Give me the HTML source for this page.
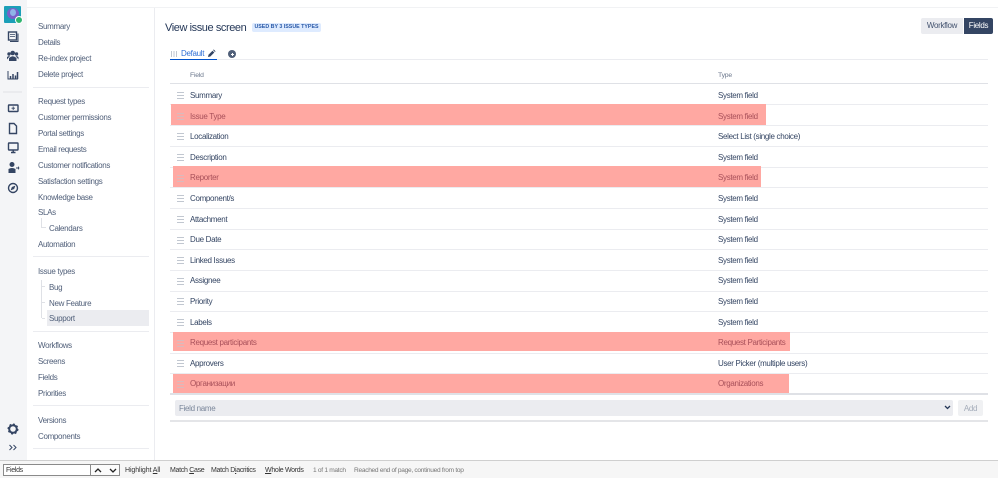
<!DOCTYPE html>
<html><head><meta charset="utf-8">
<style>
html,body{margin:0;padding:0;background:#fff}
body{width:998px;height:478px;position:relative;overflow:hidden;font-family:"Liberation Sans","Noto Sans CJK JP",sans-serif;font-size:8px;letter-spacing:-.32px;color:#42526e;filter:blur(.3px)}
.a{position:absolute;white-space:nowrap;line-height:10px}
.n{position:absolute;left:38px;margin-top:1px;white-space:nowrap;line-height:10px;color:#505f79}
.s{position:absolute;left:49px;margin-top:1px;white-space:nowrap;line-height:10px;color:#505f79}
.h{position:absolute;height:1px;background:#ebecf0}
.side{left:33px;width:116px;height:1px;position:absolute;background:#ebecf0}
.f{position:absolute;left:190px;margin-top:1px;white-space:nowrap;line-height:10px;color:#344563}
.t{position:absolute;left:718px;margin-top:1px;white-space:nowrap;line-height:10px;color:#344563}
.g{position:absolute;left:177px;width:7px;height:5px;border-top:1px solid #c1c7d0;border-bottom:1px solid #c1c7d0}
.g:after{content:"";position:absolute;left:0;right:0;top:2px;height:1px;background:#c1c7d0}
.r{position:absolute;background:#ffa8a2}
.o{color:#a8505a}
.b{color:#333;font-size:7px;letter-spacing:-.3px}
.m{color:#777;font-size:6.600px;letter-spacing:-.3px}
svg{position:absolute;overflow:visible}
</style></head><body>
<div class="a" style="left:0;top:0;width:27px;height:460px;background:#f4f5f7"></div>
<div class="a" style="left:27px;top:7px;width:971px;height:1px;background:#f1f2f4"></div>
<div class="a" style="left:154px;top:8px;width:1px;height:452px;background:#ebecf0"></div>

<div class="a" style="left:4px;top:6px;width:17px;height:17px;background:#1b9fb8;border-radius:1px"></div>
<div class="a" style="left:7px;top:8px;width:12px;height:11px;background:#7a5fc9;border-radius:50%"></div>
<div class="a" style="left:10px;top:9px;width:6px;height:7px;background:#8fb4e8;border-radius:50%"></div>
<div class="a" style="left:15px;top:16px;width:8px;height:8px;background:#2fb56f;border:1px solid #fff;border-radius:50%;box-sizing:border-box"></div>

<svg style="left:0;top:0" width="27" height="200" fill="none" stroke="#344563" stroke-width="1.4">
<rect x="8.5" y="32" width="8" height="8"/><path d="M10 41.5h8v-8" stroke-width="1"/><path d="M10 34.5h5M10 36.5h5" stroke-width=".8"/>
<g fill="#344563" stroke="none"><circle cx="12.7" cy="53" r="2.3"/><circle cx="9" cy="54" r="1.7"/><circle cx="16.5" cy="54" r="1.7"/><path d="M9 61v-3q3.700-3.500 7.500 0v3z"/><path d="M7 59.500v-2.500q1-1 3-1zM18.500 59.500v-2.500q-1-1-3-1z"/></g>
<path d="M8 71v8h10" stroke-width="1"/><path d="M10.500 79v-3M13 79v-5M15.500 79v-3.500M17.500 79v-7" stroke-width="1.5"/>
<rect x="8.500" y="105" width="9.500" height="6.500" rx=".5"/><path d="M13.200 106.500v3.500M11.500 108.200h3.500" stroke-width=".9"/>
<path d="M9.500 123.500h4.500l2.500 2.500v7.500h-7z"/>
<rect x="8.500" y="143" width="9.500" height="7" rx=".5"/><path d="M13.200 150v2M11 152.500h4.500"/>
<g fill="#344563" stroke="none"><circle cx="12" cy="164.500" r="2.500"/><path d="M8.500 173v-4q3.500-2 7 0v4z"/><path d="M16 167.500h2v-1.500l1.500 2-1.500 2v-1.500h-2z"/></g>
<circle cx="13" cy="188" r="4.500"/><path d="M15 186l-3 1.200-1 2.800 3-1.200z" fill="#344563" stroke-width=".5"/>
<path d="M3 92h19" stroke="#dfe1e6" stroke-width="1"/>
</svg>
<svg style="left:0;top:415" width="27" height="45" fill="none" stroke="#344563">
<circle cx="13" cy="14" r="3.800" stroke-width="2"/><circle cx="13" cy="14" r="5" stroke-width="1" stroke-dasharray="2 1.900"/>
<path d="M9.500 30l2.500 2.500-2.500 2.500M13.500 30l2.500 2.500-2.500 2.500" stroke-width="1"/>
</svg>

<div class="n" style="top:21px">Summary</div>
<div class="n" style="top:37px">Details</div>
<div class="n" style="top:53px">Re-index project</div>
<div class="n" style="top:69px">Delete project</div>
<div class="side" style="top:87px"></div>
<div class="n" style="top:96px">Request types</div>
<div class="n" style="top:112px">Customer permissions</div>
<div class="n" style="top:128px">Portal settings</div>
<div class="n" style="top:144px">Email requests</div>
<div class="n" style="top:160px">Customer notifications</div>
<div class="n" style="top:176px">Satisfaction settings</div>
<div class="n" style="top:192px">Knowledge base</div>
<div class="n" style="top:207px">SLAs</div>
<div class="a" style="left:41px;top:218px;width:4px;height:9px;border-left:1px solid #dfe1e6;border-bottom:1px solid #dfe1e6"></div>
<div class="s" style="top:223px">Calendars</div>
<div class="n" style="top:239px">Automation</div>
<div class="side" style="top:256px"></div>
<div class="n" style="top:266px">Issue types</div>
<div class="a" style="left:41px;top:280px;width:1px;height:38px;background:#dfe1e6"></div>
<div class="a" style="left:42px;top:286px;width:3px;height:1px;background:#dfe1e6"></div>
<div class="a" style="left:42px;top:302px;width:3px;height:1px;background:#dfe1e6"></div>
<div class="a" style="left:42px;top:318px;width:3px;height:1px;background:#dfe1e6"></div>
<div class="a" style="left:47px;top:310px;width:102px;height:16px;background:#ebecf0"></div>
<div class="s" style="top:282px">Bug</div>
<div class="s" style="top:298px">New Feature</div>
<div class="s" style="top:313px">Support</div>
<div class="side" style="top:331px"></div>
<div class="n" style="top:340px">Workflows</div>
<div class="n" style="top:356px">Screens</div>
<div class="n" style="top:372px">Fields</div>
<div class="n" style="top:388px">Priorities</div>
<div class="side" style="top:405px"></div>
<div class="n" style="top:415px">Versions</div>
<div class="n" style="top:431px">Components</div>
<div class="side" style="top:448px"></div>

<div class="a" style="left:165px;top:21px;font-size:11px;letter-spacing:-.42px;line-height:14px;color:#253858">View issue screen</div>
<div class="a" style="left:252px;top:23px;width:69px;height:9px;background:#deebff;border-radius:2px;font-size:5.300px;letter-spacing:0;font-weight:bold;line-height:9px;text-align:center;color:#2a5aa8">USED BY 3 ISSUE TYPES</div>

<div class="a" style="left:921px;top:18px;width:42px;height:16px;background:#ebecf0;border-radius:2px 0 0 2px;line-height:16px;text-align:center;color:#42526e">Workflow</div>
<div class="a" style="left:964px;top:18px;width:29px;height:16px;background:#344563;border-radius:0 2px 2px 0;line-height:16px;text-align:center;color:#fff">Fields</div>

<svg style="left:170px;top:50px" width="10" height="8"><path d="M1.500 1v6M4 1v6M6.500 1v6" stroke="#c1c7d0" stroke-width="1"/></svg>
<div class="a" style="left:181px;top:49px;color:#2f6fd6">Default</div>
<svg style="left:207px;top:49px" width="9" height="9"><path d="M1 8l.5-2.300 4-4 1.800 1.800-4 4z" fill="#344563"/><path d="M6 1l.8-.5 1.700 1.700-.5.800z" fill="#344563"/></svg>
<div class="a" style="left:170px;top:59px;width:47px;height:1px;background:#0052cc"></div>
<div class="a" style="left:217px;top:59px;width:771px;height:1px;background:#ebecf0"></div>
<div class="a" style="left:228px;top:50px;width:8px;height:8px;border-radius:50%;background:#505f79"></div>
<div class="a" style="left:230.500px;top:53.500px;width:3px;height:1px;background:#fff"></div>
<div class="a" style="left:231.500px;top:52.500px;width:1px;height:3px;background:#fff"></div>

<div class="a" style="left:190px;top:71px;font-size:6.800px;letter-spacing:-.2px;color:#6b778c">Field</div>
<div class="a" style="left:718px;top:71px;font-size:6.800px;letter-spacing:-.2px;color:#6b778c">Type</div>
<div class="a" style="left:170px;top:83px;width:818px;height:1px;background:#dfe1e6"></div>

<div class="h" style="left:170px;width:818px;top:104px"></div>
<div class="h" style="left:170px;width:818px;top:125px"></div>
<div class="h" style="left:170px;width:818px;top:146px"></div>
<div class="h" style="left:170px;width:818px;top:167px"></div>
<div class="h" style="left:170px;width:818px;top:187px"></div>
<div class="h" style="left:170px;width:818px;top:208px"></div>
<div class="h" style="left:170px;width:818px;top:229px"></div>
<div class="h" style="left:170px;width:818px;top:249px"></div>
<div class="h" style="left:170px;width:818px;top:270px"></div>
<div class="h" style="left:170px;width:818px;top:291px"></div>
<div class="h" style="left:170px;width:818px;top:311px"></div>
<div class="h" style="left:170px;width:818px;top:332px"></div>
<div class="h" style="left:170px;width:818px;top:353px"></div>
<div class="h" style="left:170px;width:818px;top:373px"></div>
<div class="a" style="left:170px;top:393px;width:818px;height:2px;background:#dfe1e6"></div>

<div class="r" style="left:171px;top:104px;width:595px;height:21px"></div>
<div class="r" style="left:173px;top:166px;width:588px;height:21px"></div>
<div class="r" style="left:173px;top:332px;width:617px;height:19px"></div>
<div class="r" style="left:173px;top:374px;width:616px;height:19px"></div>

<div class="g" style="top:92px"></div><div class="f" style="top:90px">Summary</div><div class="t" style="top:90px">System field</div>
<div class="g" style="top:113px;opacity:.6"></div><div class="f o" style="top:111px">Issue Type</div><div class="t o" style="top:111px">System field</div>
<div class="g" style="top:133px"></div><div class="f" style="top:131px">Localization</div><div class="t" style="top:131px">Select List (single choice)</div>
<div class="g" style="top:154px"></div><div class="f" style="top:152px">Description</div><div class="t" style="top:152px">System field</div>
<div class="g" style="top:175px;opacity:.6"></div><div class="f o" style="top:172px">Reporter</div><div class="t o" style="top:172px">System field</div>
<div class="g" style="top:195px"></div><div class="f" style="top:193px">Component/s</div><div class="t" style="top:193px">System field</div>
<div class="g" style="top:216px"></div><div class="f" style="top:214px">Attachment</div><div class="t" style="top:214px">System field</div>
<div class="g" style="top:237px"></div><div class="f" style="top:234px">Due Date</div><div class="t" style="top:234px">System field</div>
<div class="g" style="top:257px"></div><div class="f" style="top:255px">Linked Issues</div><div class="t" style="top:255px">System field</div>
<div class="g" style="top:278px"></div><div class="f" style="top:275px">Assignee</div><div class="t" style="top:275px">System field</div>
<div class="g" style="top:298px"></div><div class="f" style="top:296px">Priority</div><div class="t" style="top:296px">System field</div>
<div class="g" style="top:319px"></div><div class="f" style="top:317px">Labels</div><div class="t" style="top:317px">System field</div>
<div class="g" style="top:340px;opacity:.6"></div><div class="f o" style="top:337px">Request participants</div><div class="t o" style="top:337px">Request Participants</div>
<div class="g" style="top:360px"></div><div class="f" style="top:358px">Approvers</div><div class="t" style="top:358px">User Picker (multiple users)</div>
<div class="g" style="top:381px;opacity:.6"></div><div class="f o" style="top:378px">Организации</div><div class="t o" style="top:378px">Organizations</div>

<div class="a" style="left:175px;top:400px;width:778px;height:16px;background:#ebecf0;border-radius:2px"></div>
<div class="a" style="left:179px;top:404px;color:#7a869a">Field name</div>
<svg style="left:944px;top:405px" width="7" height="5"><path d="M1 1l2.500 2.500L6 1" fill="none" stroke="#253858" stroke-width="1.300"/></svg>
<div class="a" style="left:958px;top:400px;width:25px;height:16px;background:#f0f1f3;border-radius:2px;line-height:17px;text-align:center;color:#a5adba">Add</div>
<div class="a" style="left:170px;top:420px;width:818px;height:2px;background:#e4e5e8"></div>

<div class="a" style="left:0;top:460px;width:998px;height:18px;background:#f6f6f6;border-top:1px solid #cfcfcf;box-sizing:border-box"></div>
<div class="a b" style="left:3px;top:464px;width:87px;height:10px;background:#fff;border:1px solid #8a8a8a;line-height:12px;text-indent:2px">Fields</div>
<div class="a" style="left:90px;top:464px;width:15px;height:10px;background:#fbfbfb;border:1px solid #8a8a8a"></div>
<div class="a" style="left:106px;top:464px;width:13px;height:10px;background:#fbfbfb;border:1px solid #8a8a8a;border-left:0"></div>
<svg style="left:90px;top:464px" width="30" height="12"><path d="M5 8l3-3 3 3M20 5l3 3 3-3" fill="none" stroke="#222" stroke-width="1.300"/></svg>
<div class="a b" style="left:125px;top:466px;letter-spacing:-.1px">Highlight <u>A</u>ll</div>
<div class="a b" style="left:170px;top:466px">Match <u>C</u>ase</div>
<div class="a b" style="left:211px;top:466px">Match D<u>i</u>acritics</div>
<div class="a b" style="left:265px;top:466px"><u>W</u>hole Words</div>
<div class="a m" style="left:313px;top:466px">1 of 1 match</div>
<div class="a m" style="left:354px;top:466px">Reached end of page, continued from top</div>
</body></html>
